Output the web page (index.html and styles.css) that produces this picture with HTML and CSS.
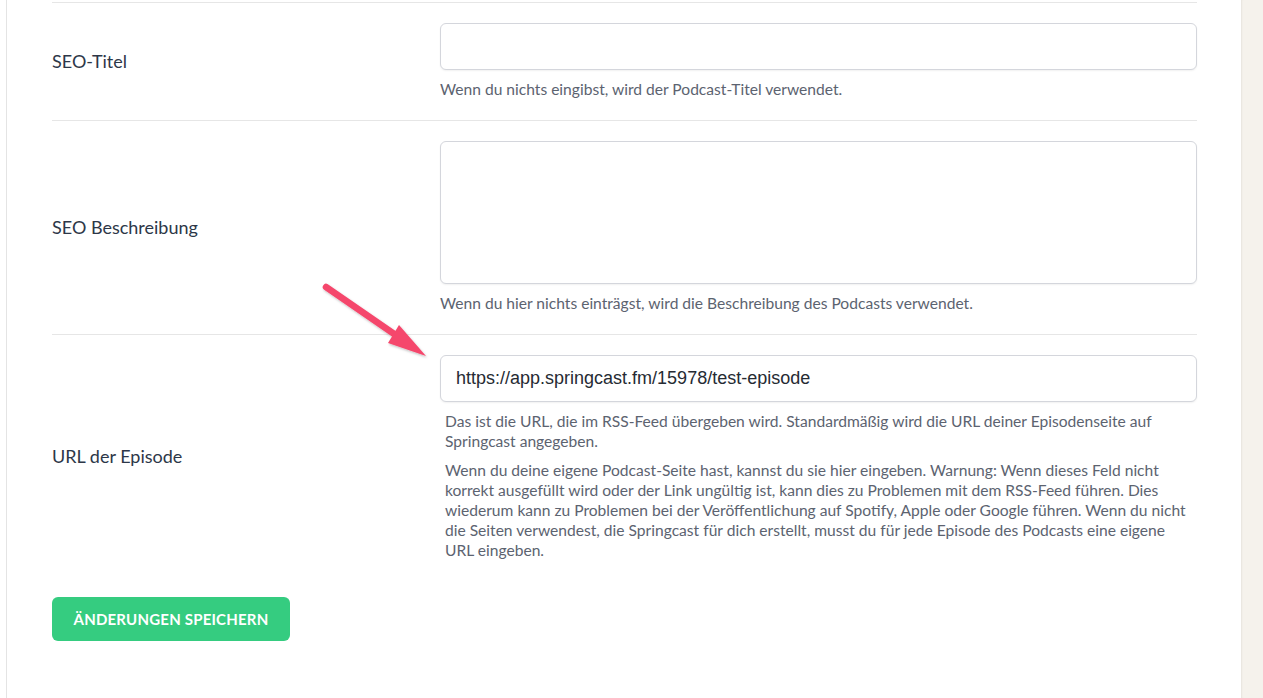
FILE: index.html
```html
<!DOCTYPE html>
<html lang="de">
<head>
<meta charset="utf-8">
<title>Episode SEO</title>
<link rel="stylesheet" href="styles.css">
</head>
<body>
<div class="page">
  <div class="gutter"></div>
  <main class="panel">
    <form class="form">
      <div class="row">
        <label class="label">SEO-Titel</label>
        <div class="field">
          <input class="input" type="text" value="">
          <p class="help">Wenn du nichts eingibst, wird der Podcast-Titel verwendet.</p>
        </div>
      </div>
      <div class="row">
        <label class="label">SEO Beschreibung</label>
        <div class="field">
          <textarea class="input textarea"></textarea>
          <p class="help">Wenn du hier nichts einträgst, wird die Beschreibung des Podcasts verwendet.</p>
        </div>
      </div>
      <div class="row row-last">
        <label class="label label-nudge">URL der Episode</label>
        <div class="field">
          <input class="input url" type="text" value="https://app.springcast.fm/15978/test-episode">
          <p class="help indented">Das ist die URL, die im RSS-Feed übergeben wird. Standardmäßig wird die URL deiner Episodenseite auf Springcast angegeben.</p>
          <p class="help indented">Wenn du deine eigene Podcast-Seite hast, kannst du sie hier eingeben. Warnung: Wenn dieses Feld nicht korrekt ausgefüllt wird oder der Link ungültig ist, kann dies zu Problemen mit dem RSS-Feed führen. Dies wiederum kann zu Problemen bei der Veröffentlichung auf Spotify, Apple oder Google führen. Wenn du nicht die Seiten verwendest, die Springcast für dich erstellt, musst du für jede Episode des Podcasts eine eigene URL eingeben.</p>
        </div>
      </div>
      <div class="actions">
        <button type="button" class="btn">Änderungen speichern</button>
      </div>
    </form>
    <svg class="arrow" width="120" height="90" viewBox="0 0 120 90">
      <defs>
        <filter id="sh" x="-20%" y="-20%" width="140%" height="140%">
          <feDropShadow dx="1" dy="1.5" stdDeviation="1.2" flood-color="#000" flood-opacity="0.25"/>
        </filter>
      </defs>
      <g filter="url(#sh)" fill="#f5476c">
        <line x1="6" y1="7" x2="80" y2="58" stroke="#f5476c" stroke-width="6.5" stroke-linecap="round"/>
        <polygon points="79,45 106,76 68,63"/>
      </g>
    </svg>
  </main>
  <aside class="side"></aside>
</div>
</body>
</html>
```
FILE: styles.css
```css
* { box-sizing: border-box; }
html, body { margin: 0; padding: 0; }
body {
  font-family: "Lato", "Noto Sans", sans-serif;
  background: #ffffff;
  color: #2d3748;
}
.page {
  display: flex;
  min-height: 698px;
}
.gutter {
  width: 6px;
  flex: none;
  background: #fff;
}
.panel {
  position: relative;
  flex: 1;
  background: #fff;
  border-left: 1px solid #e4e4e4;
  padding: 0 44px 0 45px;
}
.side {
  width: 22px;
  flex: none;
  background: #f5f2ec;
  box-shadow: inset 2px 0 2px -1px rgba(0,0,0,0.06);
}
.form {
  margin-top: 2px;
}
.row {
  display: grid;
  grid-template-columns: 388px 1fr;
  align-items: center;
  border-top: 1px solid #e6e6e6;
  padding: 20px 0 21px;
}
.row-last {
  padding-bottom: 0;
}
.label {
  font-size: 18px;
  color: #2d3748;
  line-height: 22px;
}
.label-nudge {
  padding-bottom: 4px;
}
.field {
  display: flex;
  flex-direction: column;
}
.input {
  display: block;
  width: 100%;
  height: 47px;
  border: 1px solid #d4d6dc;
  border-radius: 6px;
  background: #fff;
  box-shadow: 0 1px 2px rgba(0,0,0,0.06);
  padding: 0 15px;
  font-family: "Liberation Sans", Arial, sans-serif;
  font-size: 18px;
  color: #262b33;
  outline: none;
}
.textarea {
  height: 143px;
  resize: none;
}
.help {
  margin: 9px 0 0;
  font-size: 15.6px;
  line-height: 20px;
  color: #5c6370;
}
.help.indented {
  padding: 0 0 0 5px;
}
.actions {
  margin-top: 37px;
}
.btn {
  display: block;
  width: 238px;
  height: 44px;
  border: none;
  border-radius: 6px;
  background: #35cc80;
  color: #fff;
  font-family: "Lato", "Noto Sans", sans-serif;
  font-weight: 700;
  font-size: 15px;
  text-transform: uppercase;
  letter-spacing: 0.2px;
  cursor: pointer;
}
.arrow {
  position: absolute;
  left: 313px;
  top: 280px;
}
```
